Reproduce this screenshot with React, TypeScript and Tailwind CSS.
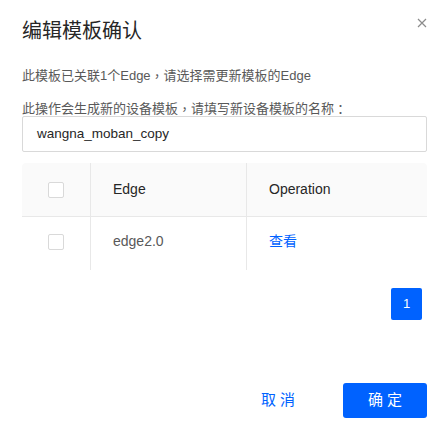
import React from "react";

const font = {
  fontFamily: '"Liberation Sans", "Noto Sans CJK SC", sans-serif',
};

const punctFont = {
  fontFamily: '"Noto Sans CJK TC", sans-serif',
};

function Punct({ ch }: { ch: string }) {
  return (
    <span
      className="inline-block w-[13px] h-[20px] leading-[20px] text-center align-top"
      style={punctFont}
    >
      {ch}
    </span>
  );
}

function Checkbox() {
  return (
    <span className="block w-4 h-4 rounded-[2px] border border-[#d9d9d9] bg-white" />
  );
}

export default function App() {
  return (
    <div
      className="w-[444px] h-[437px] bg-white relative overflow-hidden"
      style={font}
    >
      <button className="absolute left-[416px] top-[17px] w-3 h-3 flex items-center justify-center text-[#8c8c8c]">
        <svg width="10" height="10" viewBox="0 0 10 10">
          <path
            d="M1 1 L9 9 M9 1 L1 9"
            stroke="currentColor"
            strokeWidth="1.2"
          />
        </svg>
      </button>

      <div className="pl-[22px] pr-[17px]">
        <h1 className="pt-[17px] text-[20px] leading-[28px] text-[#262626] font-normal">
          编辑模板确认
        </h1>

        <p className="mt-[21px] h-[20px] text-[13px] leading-[20px] text-[#595959]">
          此模板已关联1个Edge
          <Punct ch="，" />
          请选择需更新模板的Edge
        </p>
        <p className="mt-[13px] h-[20px] text-[13px] leading-[20px] text-[#595959]">
          此操作会生成新的设备模板
          <Punct ch="，" />
          请填写新设备模板的名称
          <Punct ch="：" />
        </p>

        <div className="-mt-[3px] h-[36px] border border-[#d9d9d9] rounded-[2px] flex items-center pl-[14px] text-[13.5px] text-[#262626]">
          wangna_moban_copy
        </div>

        <div className="mt-[11px]">
          <div className="flex h-[54px] bg-[#fafafa] rounded-t-[4px] border-b border-[#e8e8e8] text-[14px] text-[#262626]">
            <div className="w-[69px] flex items-center justify-center border-r border-[#e8e8e8]">
              <Checkbox />
            </div>
            <div className="w-[156px] flex items-center pl-[22px] border-r border-[#e8e8e8]">
              Edge
            </div>
            <div className="flex-1 flex items-center pl-[22px]">Operation</div>
          </div>
          <div className="flex h-[53px] text-[14px]">
            <div className="w-[69px] flex items-center justify-center border-r border-[#e8e8e8] pb-[4px]">
              <Checkbox />
            </div>
            <div className="w-[156px] flex items-center pl-[22px] border-r border-[#e8e8e8] text-[#595959] pb-[4px]">
              edge2.0
            </div>
            <div className="flex-1 flex items-center pl-[22px] text-[#0062ff] pb-[4px]">
              查看
            </div>
          </div>
        </div>

        <div className="mt-[18px] flex justify-end pr-[5px]">
          <span className="w-[31px] h-[32px] rounded-[2px] bg-[#0062ff] text-white text-[13px] flex items-center justify-center">
            1
          </span>
        </div>

        <div className="mt-[63px] flex justify-end items-center">
          <button className="text-[15px] text-[#0062ff] tracking-[4px] mr-[44px]">
            取消
          </button>
          <button className="w-[84px] h-[35px] rounded-[3px] bg-[#0062ff] text-white text-[15px] tracking-[4px] pl-[4px]">
            确定
          </button>
        </div>
      </div>
    </div>
  );
}
